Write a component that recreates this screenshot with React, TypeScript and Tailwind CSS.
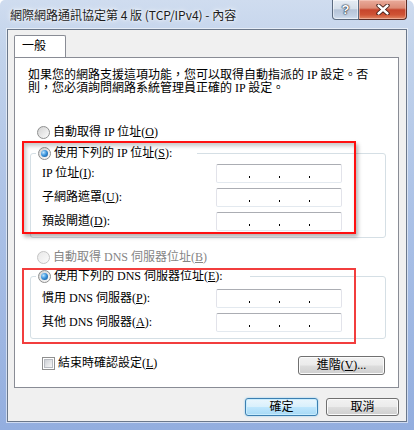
import React from "react";

function Radio({ checked, disabled }: { checked?: boolean; disabled?: boolean }) {
  return (
    <span
      className={
        disabled
          ? "flex h-[13px] w-[13px] shrink-0 items-center justify-center rounded-full border border-[#c4c4c4] bg-[linear-gradient(135deg,#e8e8e8,#fbfbfb)]"
          : "flex h-[13px] w-[13px] shrink-0 items-center justify-center rounded-full border border-[#8e8f8f] bg-[linear-gradient(135deg,#d2d2d2,#fcfcfc)]"
      }
    >
      {checked ? (
        <span className="h-[7px] w-[7px] rounded-full bg-[radial-gradient(circle_at_35%_35%,#bfe6ff_0%,#3c95dd_45%,#0d4b8a_100%)]" />
      ) : null}
    </span>
  );
}

function RadioLabel({
  checked,
  disabled,
  children,
}: {
  checked?: boolean;
  disabled?: boolean;
  children: React.ReactNode;
}) {
  return (
    <div className="flex h-[13px] items-center gap-[3px]">
      <Radio checked={checked} disabled={disabled} />
      <span className={disabled ? "whitespace-nowrap text-[#858585]" : "whitespace-nowrap text-black"}>{children}</span>
    </div>
  );
}

function IpBox() {
  return (
    <div className="flex h-[19px] w-[126px] items-end rounded-[2px] border border-[#e2e3ea] border-t-[#abadb3] border-b-[#e3e9ef] bg-white pb-[4px] pl-[32px]">
      <span className="h-[2px] w-[1px] bg-black" />
      <span className="ml-[29px] h-[2px] w-[1px] bg-black" />
      <span className="ml-[29px] h-[2px] w-[1px] bg-black" />
    </div>
  );
}

function FieldRow({ children }: { children: React.ReactNode }) {
  return (
    <div className="flex h-[19px] items-center">
      <span className="flex-1 whitespace-nowrap">{children}</span>
      <IpBox />
    </div>
  );
}

export default function App() {
  return (
    <div className="relative flex h-[430px] w-[414px] flex-col overflow-hidden rounded-tr-[7px] rounded-tl-[5px] bg-[linear-gradient(180deg,#cfdcef_0%,#c2d3eb_12%,#abc1e6_50%,#93aedf_100%)] px-[7px] pb-[8px] text-[12px] leading-[13px] text-black [font-family:'Liberation_Serif','Noto_Sans_CJK_TC',serif]">
      {/* title bar */}
      <div className="flex h-[29px] shrink-0 items-start">
        <div className="flex-1 whitespace-nowrap pl-[3px] pt-[8px] text-[12px] leading-[14px] text-[#1c1c1c] [font-family:'Noto_Sans_CJK_TC','Noto_Sans',sans-serif] [text-shadow:0_0_6px_#ffffff,0_0_3px_#ffffff]">
          網際網路通訊協定第 4 版 (TCP/IPv4) - 內容
        </div>
        <div className="flex h-[20px] items-stretch">
          <div className="flex w-[27px] items-center justify-center rounded-bl-[4px] border border-t-0 border-[#5c6b80] bg-[linear-gradient(180deg,#e6ecf4_0%,#d6dfea_45%,#b5c3d7_52%,#c3d1e4_85%,#d6e2f0_100%)] shadow-[inset_0_0_0_1px_rgba(255,255,255,0.5)]">
            <span className="text-[13px] font-bold leading-[13px] text-white [font-family:'Liberation_Sans',sans-serif] [text-shadow:0_0_1px_#1e2a3a,0_0_2px_#1e2a3a,0_0_1px_#1e2a3a]">?</span>
          </div>
          <div className="flex w-[48px] items-center justify-center rounded-br-[4px] border border-l-0 border-t-0 border-[#5a2c25] bg-[linear-gradient(180deg,#e9ab9b_0%,#dc8b76_42%,#c6452c_52%,#cf5335_78%,#e08866_100%)] shadow-[inset_0_0_0_1px_rgba(255,220,210,0.45)]">
            <svg width="14" height="11" viewBox="0 0 14 11">
              <path d="M2.5 1.5 L11.5 9.5 M11.5 1.5 L2.5 9.5" stroke="#3a1712" strokeWidth="4.2" strokeLinecap="round" />
              <path d="M2.5 1.5 L11.5 9.5 M11.5 1.5 L2.5 9.5" stroke="#ffffff" strokeWidth="2.4" strokeLinecap="round" />
            </svg>
          </div>
        </div>
      </div>

      {/* client area */}
      <div className="flex flex-1 flex-col border border-[#6b788b] bg-[#f0f0f0] pl-[6px] pr-[7px] pt-[5px] shadow-[0_0_0_1px_rgba(255,255,255,0.55)]">
        {/* tab strip */}
        <div className="flex h-[22px] shrink-0">
          <div className="relative z-10 -mb-[1px] flex h-[22px] w-[52px] items-center rounded-t-[2px] border border-b-0 border-[#898c95] bg-white pl-[7px]">
            一般
          </div>
        </div>

        {/* panel */}
        <div className="flex h-[331px] w-[385px] shrink-0 flex-col border border-[#898c95] bg-white">
          <p className="ml-[13px] mt-[11px] whitespace-nowrap">
            如果您的網路支援這項功能，您可以取得自動指派的 IP 設定。否
            <br />
            則，您必須詢問網路系統管理員正確的 IP 設定。
          </p>

          <div className="ml-[22px] mt-[31px]">
            <RadioLabel>
              自動取得 IP 位址(<u>O</u>)
            </RadioLabel>
          </div>

          <div className="ml-[15px] mt-[14px] w-[356px] rounded-[3px] border border-[#d5dfe5] pb-[6px]">
            <div className="-mt-[7px] ml-[5px] w-[161px] bg-white pl-[2px]">
              <RadioLabel checked>
                使用下列的 IP 位址(<u>S</u>):
              </RadioLabel>
            </div>
            <div className="mt-[4px] flex flex-col gap-[5px] pl-[11px] pr-[43px]">
              <FieldRow>
                IP 位址(<u>I</u>):
              </FieldRow>
              <FieldRow>
                子網路遮罩(<u>U</u>):
              </FieldRow>
              <FieldRow>
                預設閘道(<u>D</u>):
              </FieldRow>
            </div>
          </div>

          <div className="ml-[22px] mt-[13px]">
            <RadioLabel disabled>
              自動取得 DNS 伺服器位址(<u>B</u>)
            </RadioLabel>
          </div>

          <div className="ml-[15px] mt-[12px] w-[356px] rounded-[3px] border border-[#d5dfe5] pb-[6px]">
            <div className="-mt-[7px] ml-[5px] w-[214px] bg-white pl-[2px]">
              <RadioLabel checked>
                使用下列的 DNS 伺服器位址(<u>E</u>):
              </RadioLabel>
            </div>
            <div className="mt-[6px] flex flex-col gap-[5px] pl-[11px] pr-[43px]">
              <FieldRow>
                慣用 DNS 伺服器(<u>P</u>):
              </FieldRow>
              <FieldRow>
                其他 DNS 伺服器(<u>A</u>):
              </FieldRow>
            </div>
          </div>

          <div className="mt-[17px] flex items-start pl-[27px] pr-[13px]">
            <div className="mt-[1px] flex flex-1 items-center gap-[3px]">
              <span className="flex h-[13px] w-[13px] items-center justify-center border border-[#8f8f8f] bg-white">
                <span className="h-[9px] w-[9px] border border-[#b9bcc2] bg-[linear-gradient(135deg,#cdd0d5,#f7f7f7)]" />
              </span>
              <span className="whitespace-nowrap">
                結束時確認設定(<u>L</u>)
              </span>
            </div>
            <button className="flex h-[19px] w-[87px] items-center justify-center rounded-[3px] border border-[#707070] bg-[linear-gradient(180deg,#f2f2f2_0%,#ebebeb_48%,#dddddd_52%,#cfcfcf_100%)] shadow-[inset_0_0_0_1px_#fbfbfb]">
              進階(<u>V</u>)...
            </button>
          </div>
        </div>

        {/* bottom buttons */}
        <div className="mt-[10px] flex justify-end gap-[8px]">
          <button className="flex h-[18px] w-[73px] items-center justify-center rounded-[3px] border border-[#3c7fb1] bg-[linear-gradient(180deg,#eaf6fd_0%,#d9f0fc_48%,#bee6fd_52%,#a7d9f5_100%)] shadow-[inset_0_0_0_1px_#c8ecfd,0_0_2px_#7fc6f0]">
            確定
          </button>
          <button className="flex h-[18px] w-[73px] items-center justify-center rounded-[3px] border border-[#707070] bg-[linear-gradient(180deg,#f2f2f2_0%,#ebebeb_48%,#dddddd_52%,#cfcfcf_100%)] shadow-[inset_0_0_0_1px_#fbfbfb]">
            取消
          </button>
        </div>
      </div>

      {/* red annotation boxes */}
      <div className="pointer-events-none absolute left-[22px] top-[141px] h-[93px] w-[334px] border-2 border-[#ff1010] shadow-[2px_3px_4px_rgba(0,0,0,0.3),inset_2px_3px_4px_rgba(0,0,0,0.22)]" />
      <div className="pointer-events-none absolute left-[22px] top-[268px] h-[76px] w-[334px] border-2 border-[#f23e3e]" />
    </div>
  );
}
